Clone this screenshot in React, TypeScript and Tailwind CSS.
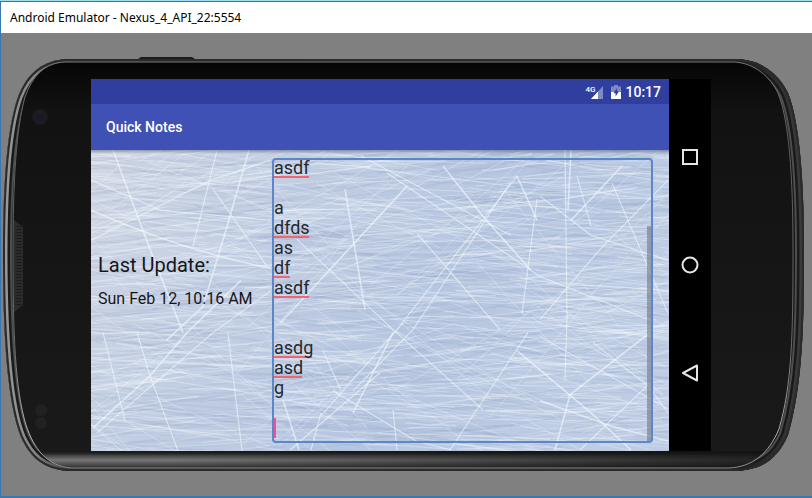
import React from "react";

function createRandom(seed: number) {
  let state = seed;
  return () => {
    state = (state * 1664525 + 1013904223) % 4294967296;
    return state / 4294967296;
  };
}

type Stroke = { d: string; color: string; width: number; opacity: number };

function makeStrokes(): Stroke[] {
  const rnd = createRandom(42);
  const strokes: Stroke[] = [];
  for (let i = 0; i < 1500; i++) {
    const x = rnd() * 680 - 90;
    const y = rnd() * 310 - 5;
    const len = 40 + rnd() * 110;
    const slope = (rnd() - 0.5) * 0.36;
    const dark = rnd() < 0.42;
    const bend = (rnd() - 0.5) * 8;
    strokes.push({
      d: `M${x.toFixed(1)} ${y.toFixed(1)}q${(len / 2).toFixed(1)} ${((slope * len) / 2 + bend).toFixed(1)} ${len.toFixed(1)} ${(slope * len).toFixed(1)}`,
      color: dark ? "#8b9dbf" : "#f8fcff",
      width: dark ? 0.8 + rnd() * 1.6 : 0.5 + rnd() * 0.8,
      opacity: dark ? 0.14 : 0.32,
    });
  }
  for (let i = 0; i < 150; i++) {
    const x = rnd() * 680 - 80;
    const y = rnd() * 300;
    const len = 90 + rnd() * 160;
    const angle = (rnd() - 0.5) * 1.8;
    const dx = Math.cos(angle) * len;
    const dy = Math.sin(angle) * len;
    strokes.push({
      d: `M${x.toFixed(1)} ${y.toFixed(1)}q${(dx / 2).toFixed(1)} ${(dy / 2 + 4).toFixed(1)} ${dx.toFixed(1)} ${dy.toFixed(1)}`,
      color: "#f4fbff",
      width: 0.8,
      opacity: 0.36,
    });
  }
  return strokes;
}

const fineStrokes = makeStrokes();

const longScratches = [
  "M22 0L44 59L61 104L92 182",
  "M46 182L59 225L87 300",
  "M12 182L34 270",
  "M2 277L59 225L96 182L150 130",
  "M6 282L122 182L180 140",
  "M137 182L151 300",
  "M158 0L137 73L112 156L75 190",
  "M126 0L102 96",
  "M122 39L176 116",
  "M0 60Q90 100 180 118",
  "M0 30L70 60L180 70",
  "M0 90L120 30L180 10",
  "M254 39L274 159",
  "M426 26L306 179L230 265",
  "M419 33L322 179L262 240",
  "M352 16L392 66L440 120",
  "M296 23L449 126L560 170",
  "M206 89L302 179L392 259",
  "M316 36L189 173",
  "M446 49L431 163",
  "M326 83L409 179",
  "M426 26L446 70",
  "M270 6L420 85",
  "M474 0L476 166L474 230",
  "M480 0L477 60",
  "M521 33L577 163",
  "M449 169L509 99L577 30",
  "M531 16L480 70",
  "M449 46L500 85L577 110",
  "M486 26L500 76",
  "M302 182L262 262",
  "M302 259L306 299",
  "M437 182L359 299",
  "M426 200L500 262L540 299",
  "M289 222L199 299",
  "M242 240L325 290L360 299",
  "M192 249L208 299",
  "M230 262L220 299",
  "M502 192L557 235L577 262",
  "M559 182L479 244L464 299",
  "M489 299L557 234",
  "M449 186L577 258",
  "M449 250L520 275L577 290",
  "M232 200L250 240",
];

function IceBackground() {
  return (
    <svg
      className="absolute inset-0 h-full w-full"
      viewBox="0 0 578 300"
      preserveAspectRatio="none"
      aria-hidden="true"
    >
      <defs>
        <linearGradient id="ice" x1="0" y1="0" x2="1" y2="0.35">
          <stop offset="0" stopColor="#d2d8e5" />
          <stop offset="0.35" stopColor="#c2cee3" />
          <stop offset="0.7" stopColor="#b6c6e0" />
          <stop offset="1" stopColor="#becde4" />
        </linearGradient>
        <linearGradient id="barShadow" x1="0" y1="0" x2="0" y2="1">
          <stop offset="0" stopColor="#4a5470" stopOpacity="0.5" />
          <stop offset="1" stopColor="#4a5470" stopOpacity="0" />
        </linearGradient>
      </defs>
      <rect width="578" height="300" fill="url(#ice)" />
      <g fill="none">
        {fineStrokes.map((s, i) => (
          <path key={i} d={s.d} stroke={s.color} strokeWidth={s.width} opacity={s.opacity} />
        ))}
        {longScratches.map((d, i) => (
          <path key={d} d={d} stroke="#f3fbff" strokeWidth={i % 3 === 0 ? 1.6 : 1.1} opacity={0.6} />
        ))}
      </g>
      <rect width="578" height="4" fill="url(#barShadow)" />
    </svg>
  );
}

function PhoneBody() {
  const outer =
    "M67 26H735C764 27 779 44 787 60C800 92 803 160 803 220C803 300 801 352 787 402C776 427 760 438 730 438H67C42 436 29 424 20 404C6 370 2 300 2 220C2 150 6 95 17 64C26 40 42 27 67 26Z";
  const inner =
    "M64 29H733C754 30 769 44 777 60C790 92 792 160 792 220C792 300 791 352 778 396C768 420 752 434 728 435H70C46 433 33 416 25 392C14 356 12 300 12 220C12 150 15 96 24 64C32 42 44 30 64 29Z";
  return (
    <svg
      className="absolute inset-0 h-full w-full"
      viewBox="0 0 811 463"
      preserveAspectRatio="none"
      aria-hidden="true"
    >
      <defs>
        <linearGradient id="rim" x1="0" x2="1" y1="0" y2="0">
          <stop offset="0" stopColor="#9a9a9a" />
          <stop offset="0.04" stopColor="#858585" />
          <stop offset="0.09" stopColor="#2c2c2c" />
          <stop offset="0.92" stopColor="#1c1c1c" />
          <stop offset="1" stopColor="#3c3d40" />
        </linearGradient>
        <linearGradient id="face" x1="0" x2="0" y1="0" y2="1">
          <stop offset="0" stopColor="#060606" />
          <stop offset="0.12" stopColor="#121212" />
          <stop offset="1" stopColor="#1a1a1a" />
        </linearGradient>
        <linearGradient id="lip" x1="0" x2="0" y1="0" y2="1">
          <stop offset="0" stopColor="#141414" stopOpacity="0" />
          <stop offset="0.25" stopColor="#444444" />
          <stop offset="0.5" stopColor="#767676" />
          <stop offset="0.8" stopColor="#464646" />
          <stop offset="1" stopColor="#1c1c1c" />
        </linearGradient>
        <linearGradient id="lipFade" x1="0" x2="1" y1="0" y2="0">
          <stop offset="0.2" stopColor="#111111" stopOpacity="0" />
          <stop offset="1" stopColor="#111111" stopOpacity="0.85" />
        </linearGradient>
        <linearGradient id="edge" x1="0" x2="0" y1="0" y2="1">
          <stop offset="0" stopColor="#777777" />
          <stop offset="0.2" stopColor="#5c5c5c" />
          <stop offset="0.7" stopColor="#6a6a6a" />
          <stop offset="0.92" stopColor="#b8b8b8" />
          <stop offset="1" stopColor="#8c8c8c" />
        </linearGradient>
        <clipPath id="outerClip">
          <path d={outer} />
        </clipPath>
        <clipPath id="faceClip">
          <path d={inner} />
        </clipPath>
      </defs>
      <path d="M137 26L140 24H191L194 26Z" fill="#1c1c1c" />
      <g clipPath="url(#outerClip)">
        <path d={outer} fill="#161616" />
        <path d={outer} fill="none" stroke="#4e4e50" strokeWidth="18" />
        <path d={outer} fill="none" stroke="#1a1a1a" strokeWidth="14" />
        <path d={outer} fill="none" stroke="url(#rim)" strokeWidth="9" />
        <path d={outer} fill="none" stroke="#2a2a2a" strokeWidth="4" />
      </g>
      <path d={inner} fill="url(#face)" />
      <g clipPath="url(#faceClip)">
        <rect x="12" y="418" width="780" height="18" fill="url(#lip)" />
        <rect x="12" y="418" width="780" height="18" fill="url(#lipFade)" />
        <path d="M12 186L22 194V272L12 280Z" fill="#2b2b2b" />
        <path d="M18 193V273" stroke="#1b1b1b" strokeWidth="5" strokeDasharray="1 2" />
      </g>
      <path d={inner} fill="none" stroke="url(#edge)" />
      <circle cx="39" cy="84" r="8" fill="#1b1b20" />
      <circle cx="39" cy="84" r="3" fill="#181830" />
      <circle cx="40" cy="377" r="6" fill="#212121" />
      <circle cx="40" cy="390" r="6" fill="#212121" />
    </svg>
  );
}

function StatusIcons() {
  return (
    <div className="flex items-center gap-2">
      <div className="flex">
        <span className="text-[8px] leading-[10px] font-medium">4G</span>
        <svg className="-ml-1 h-[14px] w-3" viewBox="0 0 12 14" aria-label="Signal">
          <path d="M12 1V14H0Z" fill="#8089c5" />
          <path d="M7 6.5V14H0Z" fill="#ffffff" />
        </svg>
      </div>
      <svg className="h-[14px] w-[10px]" viewBox="0 0 10 14" aria-label="Battery charging">
        <path d="M3 0H7V1.500H10V7H0V1.500H3Z" fill="#8089c5" />
        <path d="M0 7H10V14H0Z" fill="#ffffff" />
        <path d="M6 3L2.500 8.300H4.600V11.500L8 6.300H6Z" fill="#303f9f" />
      </svg>
    </div>
  );
}

const noteLines = [
  { text: "asdf", mark: "w-[35px]" },
  { text: "", mark: "" },
  { text: "a", mark: "" },
  { text: "dfds", mark: "w-[35px]" },
  { text: "as", mark: "" },
  { text: "df", mark: "w-4" },
  { text: "asdf", mark: "w-[35px]" },
  { text: "", mark: "" },
  { text: "", mark: "" },
  { text: "asdg", mark: "w-[38px]" },
  { text: "asd", mark: "w-7" },
  { text: "g", mark: "" },
  { text: "", mark: "" },
];

function NoteEditor() {
  return (
    <div className="-ml-px grid min-w-0 flex-1 overflow-hidden rounded-[4px] border-2 border-[#5b87c6]">
      <div className="col-start-1 row-start-1 -mt-0.5 flex flex-col" aria-hidden="true">
        {noteLines.map((line, i) => (
          <div key={i} className="flex h-5 items-end">
            {line.mark && <div className={`h-[2px] bg-[#ef6672] ${line.mark}`} />}
          </div>
        ))}
        <div className="h-5 w-[2px] bg-[#f0509a]" />
      </div>
      <textarea
        aria-label="Note"
        spellCheck={false}
        defaultValue={noteLines.map((line) => line.text).join("\n")}
        className="col-start-1 row-start-1 -mt-0.5 resize-none overflow-hidden bg-transparent text-[18px] leading-5 text-[#25282d] outline-none"
      />
      <div
        className="pointer-events-none col-start-1 row-start-1 mt-[66px] w-1 justify-self-end bg-[#66707f]/55"
        aria-hidden="true"
      />
    </div>
  );
}

function NavigationBar() {
  const icon = "h-[18px] w-[18px] fill-none stroke-[#e6e6e6] stroke-2";
  const button = "flex flex-1 items-center justify-center";
  return (
    <nav className="flex w-[42px] flex-col bg-black py-6">
      <button type="button" aria-label="Overview" className={button}>
        <svg className={icon} viewBox="0 0 18 18">
          <rect x="2" y="2" width="14" height="14" />
        </svg>
      </button>
      <button type="button" aria-label="Home" className={button}>
        <svg className={icon} viewBox="0 0 18 18">
          <circle cx="9" cy="9" r="7.500" />
        </svg>
      </button>
      <button type="button" aria-label="Back" className={button}>
        <svg className={icon} viewBox="0 0 18 18">
          <path d="M16 1.500V16.500L2 9Z" strokeLinejoin="round" />
        </svg>
      </button>
    </nav>
  );
}

export default function App() {
  return (
    <div className="flex min-h-screen flex-col border-t border-t-[#9fdcf3] bg-[#808080] font-['Roboto',sans-serif]">
      <div className="flex flex-1 flex-col border-t border-b-2 border-l border-[#3a78ae]">
        <header className="flex h-[31px] items-center bg-white px-[9px]">
          <h1 className="font-['Noto_Sans',sans-serif] text-[12px] leading-4 text-black">
            Android Emulator - Nexus_4_API_22:5554
          </h1>
        </header>
        <main className="relative flex flex-1 pt-[46px] pr-[101px] pb-[45px] pl-[90px]">
          <PhoneBody />
          <div className="relative flex min-w-0 flex-1">
            <section className="flex min-w-0 flex-1 flex-col">
              <div className="flex h-[25px] items-center justify-end gap-1 bg-[#303f9f] pr-2 text-white">
                <StatusIcons />
                <span className="text-[14px] leading-5 font-medium">10:17</span>
              </div>
              <div className="flex h-[46px] items-center bg-[#3f51b5] px-[15px]">
                <h2 className="text-[14px] leading-5 font-medium text-white">Quick Notes</h2>
              </div>
              <div className="relative flex flex-1">
                <IceBackground />
                <div className="relative flex min-w-0 flex-1 py-2 pr-4">
                  <div className="flex w-[182px] flex-col justify-center gap-3 pb-10 pl-[7px] text-[#14161a]">
                    <p className="text-[20px] leading-6">Last Update:</p>
                    <p className="text-[16px] leading-5">Sun Feb 12, 10:16 AM</p>
                  </div>
                  <NoteEditor />
                </div>
              </div>
            </section>
            <NavigationBar />
          </div>
        </main>
      </div>
    </div>
  );
}
